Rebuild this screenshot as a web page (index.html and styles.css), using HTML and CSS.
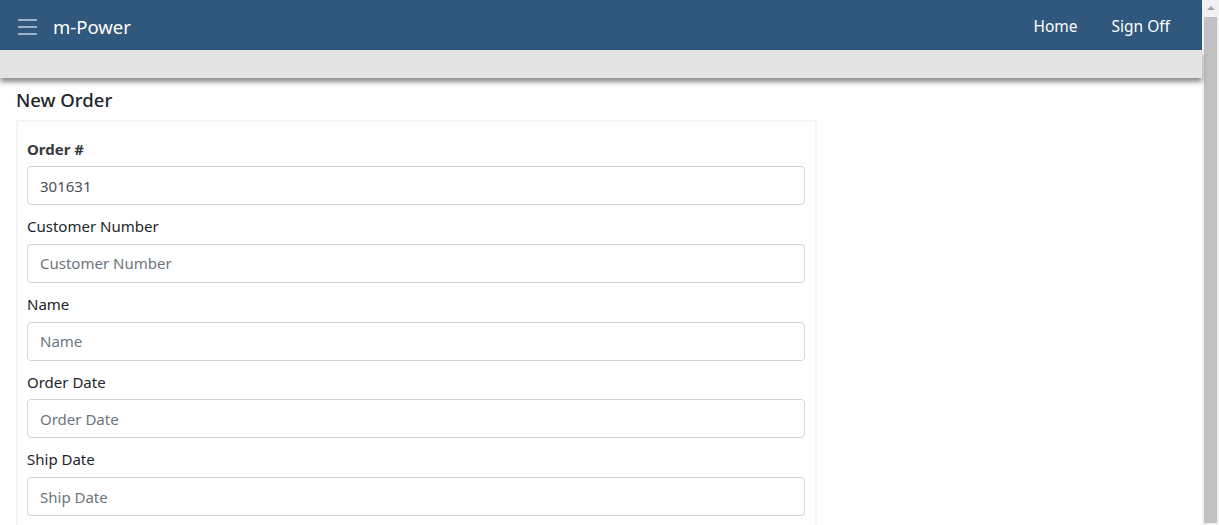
FILE: index.html
```html
<!DOCTYPE html>
<html lang="en">
<head>
  <meta charset="UTF-8" />
  <meta name="viewport" content="width=device-width, initial-scale=1.0"/>
  <title>m-Power - New Order</title>
  <link rel="stylesheet" href="styles.css">
</head>
<body>
  <div class="janela">
    <div class="pagina">
      <nav class="topo">
        <div class="marca">
          <span class="hamburguer"><i></i><i></i><i></i></span>
          <span class="logo">m-Power</span>
        </div>
        <div class="links">
          <a href="#">Home</a>
          <a href="#">Sign Off</a>
        </div>
      </nav>
      <div class="faixa"></div>

      <main class="conteudo">
        <h1>New Order</h1>
        <form class="cartao">
          <div class="grupo">
            <label class="forte">Order #</label>
            <input type="text" value="301631">
          </div>
          <div class="grupo">
            <label>Customer Number</label>
            <input type="text" placeholder="Customer Number">
          </div>
          <div class="grupo">
            <label>Name</label>
            <input type="text" placeholder="Name">
          </div>
          <div class="grupo">
            <label>Order Date</label>
            <input type="text" placeholder="Order Date">
          </div>
          <div class="grupo">
            <label>Ship Date</label>
            <input type="text" placeholder="Ship Date">
          </div>
        </form>
      </main>
    </div>

    <div class="rolagem">
      <div class="seta"></div>
      <div class="polegar"></div>
    </div>
  </div>
</body>
</html>
```

FILE: styles.css
```css
html, body {
  margin: 0;
  height: 100%;
  overflow: hidden;
}

body {
  font-family: "Noto Sans", "Open Sans", sans-serif;
  color: #212529;
  background-color: #fff;
}

.janela {
  display: flex;
  height: 100%;
}

.pagina {
  flex: 1;
  min-width: 0;
}

.topo {
  height: 50px;
  background-color: #30577c;
  display: flex;
  align-items: center;
  justify-content: space-between;
  padding: 0 18px;
}

.marca {
  display: flex;
  align-items: center;
  gap: 16px;
}

.hamburguer {
  display: flex;
  flex-direction: column;
  gap: 5px;
  width: 19px;
  margin-top: 4px;
}

.hamburguer i {
  display: block;
  height: 2px;
  background-color: #9db2c7;
}

.logo {
  color: #fff;
  font-size: 18.5px;
  margin-top: 2px;
}

.links {
  display: flex;
  gap: 34px;
  padding-right: 14px;
}

.links a {
  color: #fff;
  text-decoration: none;
  font-size: 15.5px;
  margin-top: 2px;
}

.faixa {
  height: 28px;
  background-color: #e4e4e4;
  box-shadow: 0 4px 5px rgba(0, 0, 0, 0.45);
  position: relative;
}

.conteudo {
  padding: 8px 16px 0;
}

h1 {
  margin: 0 0 6px;
  font-size: 18.5px;
  font-weight: 500;
  line-height: 28px;
}

.cartao {
  width: 778px;
  border: 2px solid #f5f5f5;
  padding: 15px 10px 0 9px;
}

.grupo {
  margin-bottom: 10px;
}

label {
  display: block;
  font-size: 15px;
  line-height: 23.75px;
  margin-bottom: 5px;
  color: #212529;
}

label.forte {
  font-weight: bold;
  color: #3a3a3a;
  line-height: 24px;
}

input {
  display: block;
  box-sizing: border-box;
  width: 100%;
  height: 39px;
  border: 1px solid #ced4da;
  border-radius: 4px;
  padding: 0 12px;
  font-family: inherit;
  font-size: 15px;
  color: #495057;
  background-color: #fff;
}

input::placeholder {
  color: #6c757d;
}

.rolagem {
  width: 17px;
  background-color: #f1f1f1;
  display: flex;
  flex-direction: column;
  align-items: center;
}

.seta {
  width: 0;
  height: 0;
  border-left: 4px solid transparent;
  border-right: 4px solid transparent;
  border-bottom: 4px solid #a3a3a3;
  margin: 6px 0 7px;
}

.polegar {
  width: 13px;
  flex: 1;
  margin-bottom: 2px;
  background-color: #c1c1c1;
}
```
